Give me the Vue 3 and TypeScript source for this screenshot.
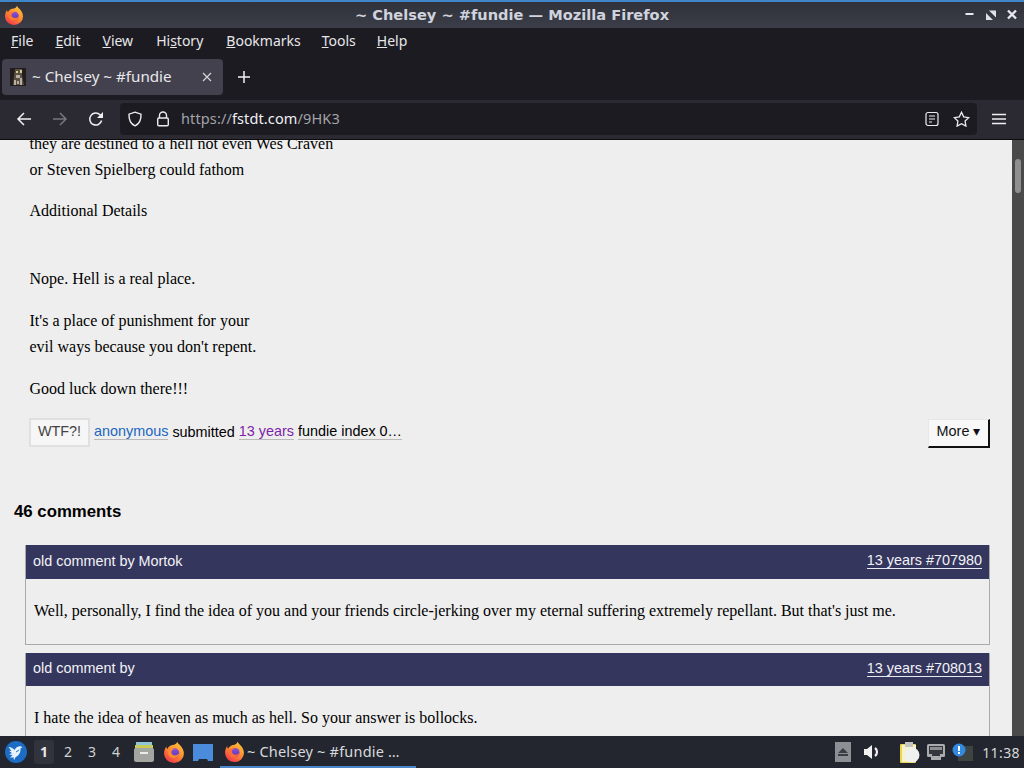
<script setup lang="ts">
const menus = [
  { k: 'F', r: 'ile' }, { k: 'E', r: 'dit' }, { k: 'V', r: 'iew' }
]
const comments = [
  { by: 'old comment by Mortok', link: '13 years #707980', text: "Well, personally, I find the idea of you and your friends circle-jerking over my eternal suffering extremely repellant. But that's just me." },
  { by: 'old comment by', link: '13 years #708013', text: 'I hate the idea of heaven as much as hell. So your answer is bollocks.' }
]
</script>

<template>
  <div class="screen">
    <header class="titlebar">
      <svg class="ff" width="20" height="20" viewBox="0 0 20 20">
        <defs>
          <linearGradient id="fx" x1="0.8" y1="0" x2="0.2" y2="1"><stop offset="0" stop-color="#ffc93a"/><stop offset=".5" stop-color="#ff8a30"/><stop offset="1" stop-color="#f0304f"/></linearGradient>
          <linearGradient id="fy" x1="0.5" y1="0" x2="0.5" y2="1"><stop offset="0" stop-color="#8a4fd8"/><stop offset="1" stop-color="#5a3bb5"/></linearGradient>
        </defs>
        <path d="M13 .5c.3 2 2 2.500 3.500 4.500 1.500 2 2.500 4 2.500 6.500a9 8.500 0 0 1-18 0C1 9 1.800 6.500 3 5c0 1 .4 1.800 1 2.300C5 4.500 8 3.500 10 3.500 11.500 3 12.800 2 13 .5z" fill="url(#fx)"/>
        <circle cx="10.500" cy="11" r="4.300" fill="url(#fy)"/>
        <path d="M5 8.500c2-1.500 4-1.800 6-1.300-2 .3-3.500 1.300-3.500 2.800 0 2 2 3.500 4.500 3 1.500-.3 2.500-1.300 3-2.500 0 3-2.500 5-5.500 5C6.500 15.500 4.500 13 4.500 11c0-1 .2-1.800.5-2.500z" fill="#ff7a2f"/>
      </svg>
      <div class="wintitle">~ Chelsey ~ #fundie — Mozilla Firefox</div>
      <div class="winbtns">
        <svg width="12" height="12" viewBox="0 0 12 12"><path d="M1.500 5h8" stroke="#e6e8ee" stroke-width="2"/></svg>
        <svg width="12" height="12" viewBox="0 0 12 12"><path d="M4 1.500h7v7zM8 11H1V4z" fill="#dfe1e8"/></svg>
        <svg width="12" height="12" viewBox="0 0 12 12"><path d="M2 1.500l8 8M10 1.500l-8 8" stroke="#e6e8ee" stroke-width="2.400"/></svg>
      </div>
    </header>

    <nav class="menubar">
      <span v-for="m in menus" :key="m.k" class="menu"><u>{{ m.k }}</u>{{ m.r }}</span>
      <span class="menu hist">Hi<u>s</u>tory</span>
      <span class="menu"><u>B</u>ookmarks</span>
      <span class="menu tools"><u>T</u>ools</span>
      <span class="menu help"><u>H</u>elp</span>
    </nav>

    <div class="tabbar">
      <div class="tab">
        <svg class="favicon" width="16" height="18" viewBox="0 0 16 18"><rect width="16" height="18" fill="#221e1d"/><path d="M5 1h7v6l2 10H3l1-9z" fill="#5a4f45"/><path d="M6 3h2v2H6zM10 2h2v3h-2z" fill="#d8cc8a"/><path d="M6 7h4v3H6zM4 12h2v5H4zM10 10h2v7h-2zM7 13h2v3H7z" fill="#b7b0a0"/></svg>
        <span class="tabtitle">~ Chelsey ~ #fundie</span>
        <svg class="tabclose" width="10" height="10" viewBox="0 0 10 10"><path d="M1 1l8 8M9 1l-8 8" stroke="#d4d4d9" stroke-width="1.200"/></svg>
      </div>
      <svg class="newtab" width="14" height="14" viewBox="0 0 14 14"><path d="M7 1v12M1 7h12" stroke="#f2f2f5" stroke-width="1.500"/></svg>
    </div>

    <div class="toolbar">
      <svg class="tb back" width="16" height="16" viewBox="0 0 16 16"><path d="M15 8H2M8 2L2 8l6 6" fill="none" stroke="#f0f0f3" stroke-width="1.500"/></svg>
      <svg class="tb fwd" width="16" height="16" viewBox="0 0 16 16"><path d="M1 8h13M8 2l6 6-6 6" fill="none" stroke="#76767c" stroke-width="1.500"/></svg>
      <svg class="tb reload" width="16" height="16" viewBox="0 0 16 16"><path d="M13.600 9.500A6 6 0 1 1 12 3.800L14 6" fill="none" stroke="#f0f0f3" stroke-width="1.500"/><path d="M15 1v6H9z" fill="#f0f0f3"/></svg>
      <div class="urlbar">
        <svg class="shield" width="16" height="16" viewBox="0 0 16 16"><path d="M8 1.200l6 2c.3 5.800-1.500 9.500-6 11.600C3.500 12.700 1.700 9 2 3.200z" fill="none" stroke="#ececf0" stroke-width="1.400"/></svg>
        <svg class="lock" width="14" height="16" viewBox="0 0 14 16"><path d="M3.500 7V4.500a3.500 3.500 0 0 1 7 0V7" fill="none" stroke="#ececf0" stroke-width="1.400"/><rect x="1.700" y="7" width="10.600" height="7.800" rx="1.200" fill="none" stroke="#ececf0" stroke-width="1.400"/></svg>
        <span class="url"><span class="dim">https://</span>fstdt.com<span class="dim">/9HK3</span></span>
        <svg class="reader" width="14" height="16" viewBox="0 0 14 16"><rect x="1" y="1.500" width="12" height="13" rx="2" fill="none" stroke="#ececf0" stroke-width="1.200"/><path d="M4 5h6M4 8h6M4 11h3" stroke="#ececf0" stroke-width="1.200"/></svg>
        <svg class="star" width="17" height="16" viewBox="0 0 17 16"><path d="M8.500 1.300l2.200 4.600 5 .7-3.600 3.500.8 5-4.400-2.400-4.400 2.400.8-5L1.300 6.600l5-.7z" fill="none" stroke="#ececf0" stroke-width="1.300"/></svg>
      </div>
      <svg class="burger" width="14" height="12" viewBox="0 0 14 12"><path d="M0 1.500h14M0 6h14M0 10.500h14" stroke="#f0f0f3" stroke-width="1.300"/></svg>
    </div>

    <main class="viewport">
      <div class="page">
        <article class="post">
          <p>they are destined to a hell not even Wes Craven<br>or Steven Spielberg could fathom</p>
          <p>Additional Details<br><br></p>
          <p>Nope. Hell is a real place.</p>
          <p>It's a place of punishment for your<br>evil ways because you don't repent.</p>
          <p>Good luck down there!!!</p>
        </article>
        <div class="meta">
          <button class="wtf">WTF?!</button>
          <a class="m blue">anonymous</a>
          <span>submitted</span>
          <a class="m purple">13 years</a>
          <a class="m black">fundie index 0…</a>
          <button class="more">More ▾</button>
        </div>
        <h2 class="count">46 comments</h2>
        <section v-for="c in comments" :key="c.link" class="comment">
          <div class="chead"><span>{{ c.by }}</span><a class="clink">{{ c.link }}</a></div>
          <p class="cbody">{{ c.text }}</p>
        </section>
      </div>
      <div class="scrollbar"><div class="thumb"></div></div>
    </main>

    <footer class="taskbar">
      <svg class="start" width="22" height="22" viewBox="0 0 22 22"><circle cx="11" cy="11" r="11" fill="#1a6cc4"/><path d="M3.500 6c2.500.3 4.500 1.300 6 3 1-2 2.500-3.500 5-3.800 1-.1 2 .3 3 1l-2 1c.3 4-1.500 7.500-5 9l-1.500 3-.5-3-3.500.5 2.500-2.500-3.500-1 3-1-3-2.500 2.500.2z" fill="#e7f2fb"/><path d="M11 11l3-2" stroke="#1a6cc4" stroke-width="1"/></svg>
      <div class="pager">
        <span class="ws on">1</span><span class="ws">2</span><span class="ws">3</span><span class="ws">4</span>
      </div>
      <svg class="launch files" width="22" height="22" viewBox="0 0 22 22"><path d="M3 1h16v4H3z" fill="#8fc5d6"/><path d="M2 4h18v4H2z" fill="#c7c95f"/><rect x="1" y="7" width="20" height="14" rx="2" fill="#a2a5a0"/><rect x="7" y="11" width="8" height="2" fill="#ececec"/></svg>
      <svg class="launch browser" width="22" height="22" viewBox="0 0 20 20"><path d="M13 .5c.3 2 2 2.500 3.500 4.500 1.500 2 2.500 4 2.500 6.500a9 8.500 0 0 1-18 0C1 9 1.800 6.500 3 5c0 1 .4 1.800 1 2.300C5 4.500 8 3.500 10 3.500 11.500 3 12.800 2 13 .5z" fill="url(#fx)"/><circle cx="10.500" cy="11" r="4.300" fill="url(#fy)"/><path d="M5 8.500c2-1.500 4-1.800 6-1.300-2 .3-3.500 1.300-3.500 2.800 0 2 2 3.500 4.500 3 1.500-.3 2.500-1.300 3-2.500 0 3-2.500 5-5.500 5C6.500 15.500 4.500 13 4.500 11c0-1 .2-1.800.5-2.500z" fill="#ff8a30"/></svg>
      <svg class="launch" width="22" height="22" viewBox="0 0 22 22"><path d="M1 3h20v17h-5l-1-2H7l-1 2H1z" fill="#4a8bdc"/></svg>
      <div class="task">
        <svg width="21" height="21" viewBox="0 0 20 20"><path d="M13 .5c.3 2 2 2.500 3.500 4.500 1.500 2 2.500 4 2.500 6.500a9 8.500 0 0 1-18 0C1 9 1.800 6.500 3 5c0 1 .4 1.800 1 2.300C5 4.500 8 3.500 10 3.500 11.500 3 12.800 2 13 .5z" fill="url(#fx)"/><circle cx="10.500" cy="11" r="4.300" fill="url(#fy)"/><path d="M5 8.500c2-1.500 4-1.800 6-1.300-2 .3-3.500 1.300-3.500 2.800 0 2 2 3.500 4.500 3 1.500-.3 2.500-1.300 3-2.500 0 3-2.500 5-5.500 5C6.500 15.500 4.500 13 4.500 11c0-1 .2-1.800.5-2.500z" fill="#ff6a3a"/></svg>
        <span class="tasktitle">~ Chelsey ~ #fundie …</span>
      </div>
      <div class="tray">
        <div class="eject"><svg width="10" height="8" viewBox="0 0 10 8"><path d="M5 0l5 5H0zM0 6h10v2H0z" fill="#3a3d42"/></svg></div>
        <svg class="vol" width="18" height="14" viewBox="0 0 18 14"><path d="M0 4h3l5-4v14l-5-4H0z" fill="#f2f2f2"/><path d="M11 3a5 5 0 0 1 0 8" fill="none" stroke="#f2f2f2" stroke-width="2.200"/></svg>
        <svg class="clip" width="20" height="21" viewBox="0 0 20 21"><rect x="0" y="2" width="16" height="19" rx="1" fill="#e8d850"/><rect x="2" y="3" width="14" height="17" fill="#f6f1c8"/><circle cx="12" cy="13" r="7.500" fill="#f0f0ee"/><rect x="5" y="0" width="8" height="5" fill="#c4c4c4"/></svg>
        <svg class="net" width="20" height="18" viewBox="0 0 20 18"><rect x="1" y="1" width="18" height="13" rx="1.500" fill="#a9abae"/><path d="M5 14h10v3H5z" fill="#a9abae"/><path d="M3 3h14v8h-3v2H6v-2H3z" fill="#34373d"/><path d="M5 4v3M7 4v3M9 4v3M11 4v3M13 4v3M15 4v3" stroke="#e6e6e6" stroke-width="1"/></svg>
        <svg class="alert" width="21" height="18" viewBox="0 0 21 18"><rect x="6" y="3" width="15" height="15" fill="#3d4441"/><circle cx="7" cy="7" r="6.500" fill="#3389e0"/><rect x="6" y="3" width="2" height="5" fill="#fff"/><rect x="6" y="9" width="2" height="2" fill="#fff"/></svg>
        <span class="clock">11:38</span>
      </div>
    </footer>
  </div>
</template>

<style scoped>
.screen { width: 1024px; height: 768px; display: flex; flex-direction: column; overflow: hidden; font-family: "Noto Sans", "DejaVu Sans", sans-serif; background: #1c1b22; }
.titlebar { height: 28px; flex: none; box-sizing: border-box; border-top: 2px solid #3f85c8; background: linear-gradient(#2f323a, #3b3e48); display: flex; align-items: center; position: relative; color: #e8e9ee; }
.ff { margin-left: 4px; }
.wintitle { position: absolute; left: 0; right: 0; top: 4px; text-align: center; font-family: "DejaVu Sans", sans-serif; font-size: 14.600px; font-weight: 700; line-height: 18px; color: #d0d3de; }
.winbtns { margin-left: auto; display: flex; gap: 9px; margin-right: 6px; }
.menubar { height: 26px; flex: none; display: flex; align-items: center; padding: 0 0 2px 11px; box-sizing: border-box; gap: 22px; font-size: 14px; color: #e7e7ea; background: #1c1b22; }
.hist { margin-left: 1px; margin-right: 1px; }
.tools { margin-left: -1px; }
.help { margin-left: -1px; }
.tabbar { height: 46px; flex: none; display: flex; align-items: center; padding: 0 0 0 2px; background: #1c1b22; box-sizing: border-box; }
.tab { width: 221px; height: 36px; box-sizing: border-box; background: #42414d; border-radius: 4px; display: flex; align-items: center; padding: 0 0 2px 8px; color: #e8e8ec; font-size: 15.200px; }
.favicon { flex: none; margin-top: 2px; }
.tabtitle { margin-left: 6px; }
.tabclose { margin-left: auto; margin-right: 11px; margin-top: 2px; }
.newtab { margin-left: 14px; }
.toolbar { height: 40px; flex: none; box-sizing: border-box; display: flex; align-items: center; padding-bottom: 2px; background: #2b2a33; border-bottom: 1px solid #0c0c0d; position: relative; }
.tb { flex: none; }
.back { margin-left: 16px; }
.fwd { margin-left: 20px; }
.reload { margin-left: 20px; }
.urlbar { width: 857px; height: 32px; margin-left: 16px; display: flex; align-items: center; background: #1c1b22; border-radius: 4px; color: #f0f0f3; font-size: 14.500px; }
.shield { margin-left: 7px; flex: none; }
.lock { margin-left: 13px; flex: none; }
.url { margin-left: 11px; letter-spacing: .12px; padding-bottom: 1px; }
.dim { color: #a3a3a8; }
.reader { margin-left: auto; flex: none; }
.star { margin-left: 14px; margin-right: 7px; flex: none; }
.burger { margin-left: 15px; flex: none; }
.viewport { height: 596px; flex: none; display: flex; overflow: hidden; background: #eee; }
.page { width: 1012px; flex: none; box-sizing: border-box; margin-top: -9px; font-family: "Liberation Sans", Arial, sans-serif; color: #000; }
.post { padding: 0 0 0 29.500px; font-family: "Liberation Serif", "Times New Roman", serif; font-size: 16px; line-height: 26px; }
.post p { margin: 0 0 15.400px; }
.post p:nth-child(3) { margin-bottom: 16.400px; }
.meta { margin: -2px 22px 0 29px; height: 34px; display: flex; align-items: center; gap: 4px; font-size: 14.400px; }
.wtf { width: 61px; height: 29px; margin-top: 2px; box-sizing: border-box; background: #f6f6f6; border: 2px solid #e0e0e0; color: #444; font: 14.400px "Liberation Sans", Arial, sans-serif; padding: 0 0 3px; }
.m { border-bottom: 1px solid #b9b9b9; line-height: 16px; }
.blue { color: #1b66c0; }
.purple { color: #7d1fa8; }
.black { color: #000; }
.more { margin: 3px 0 0 auto; width: 62px; height: 29px; box-sizing: border-box; padding: 0 0 3px; background: #f8f8f8; border: 0; border-top: 1px solid #e8e8e8; border-left: 1px solid #e8e8e8; border-right: 2px solid #111; border-bottom: 2px solid #111; font: 14.400px "Liberation Sans", Arial, sans-serif; color: #111; }
.count { margin: 52px 0 0 14px; font-size: 16.800px; line-height: 22px; font-weight: 700; }
.comment { margin: 22.200px 22px 0 25px; border: 1px solid #aaa; border-top: 0; }
.comment + .comment { margin-top: 8px; }
.chead { height: 33.600px; box-sizing: border-box; background: #35365d; color: #f2f2f7; display: flex; align-items: center; justify-content: space-between; padding: 0 7px 2px 7px; font-size: 14.400px; }
.clink { margin-top: 1px; border-bottom: 1px solid #e8e8ef; line-height: 15px; }
.cbody { margin: 0; height: 64.800px; box-sizing: border-box; padding: 19.200px 8px 0 8px; font-family: "Liberation Serif", "Times New Roman", serif; font-size: 16px; line-height: 26px; }
.scrollbar { width: 12px; flex: none; background: #4a4a4a; position: relative; }
.thumb { position: absolute; left: 3px; top: 19px; width: 6px; height: 34px; border-radius: 3px; background: #8f8f8f; }
.taskbar { height: 32px; flex: none; display: flex; align-items: center; background: #23262e; color: #d6d8dc; position: relative; }
.start { margin-left: 5px; flex: none; }
.pager { display: flex; margin-left: 5px; font-size: 14px; }
.ws { width: 24px; text-align: center; line-height: 24px; color: #cfd1d6; }
.on { background: #31343c; border-radius: 3px; font-weight: 700; width: 20px; margin: 0 2px; color: #e6e7ea; }
.launch { flex: none; margin-left: 7px; }
.launch.files { margin-left: 5px; }
.launch.browser { margin-left: 8px; }
.task { margin-left: 6px; width: 196px; height: 32px; box-sizing: border-box; display: flex; align-items: center; padding-left: 4px; border-bottom: 2px solid #4a86c8; font-size: 14.500px; color: #d8dade; }
.tasktitle { margin-left: 2px; white-space: nowrap; letter-spacing: .2px; }
.tray { margin-left: auto; display: flex; align-items: center; }
.eject { width: 16px; height: 20px; background: #8c8f94; display: flex; align-items: center; justify-content: center; }
.vol { margin-left: 13px; }
.clip { margin-left: 18px; }
.net { margin-left: 6px; }
.alert { margin-left: 6px; }
.clock { margin: 0 4px 0 9px; font-size: 14px; letter-spacing: .4px; color: #d6d8dc; }
</style>
